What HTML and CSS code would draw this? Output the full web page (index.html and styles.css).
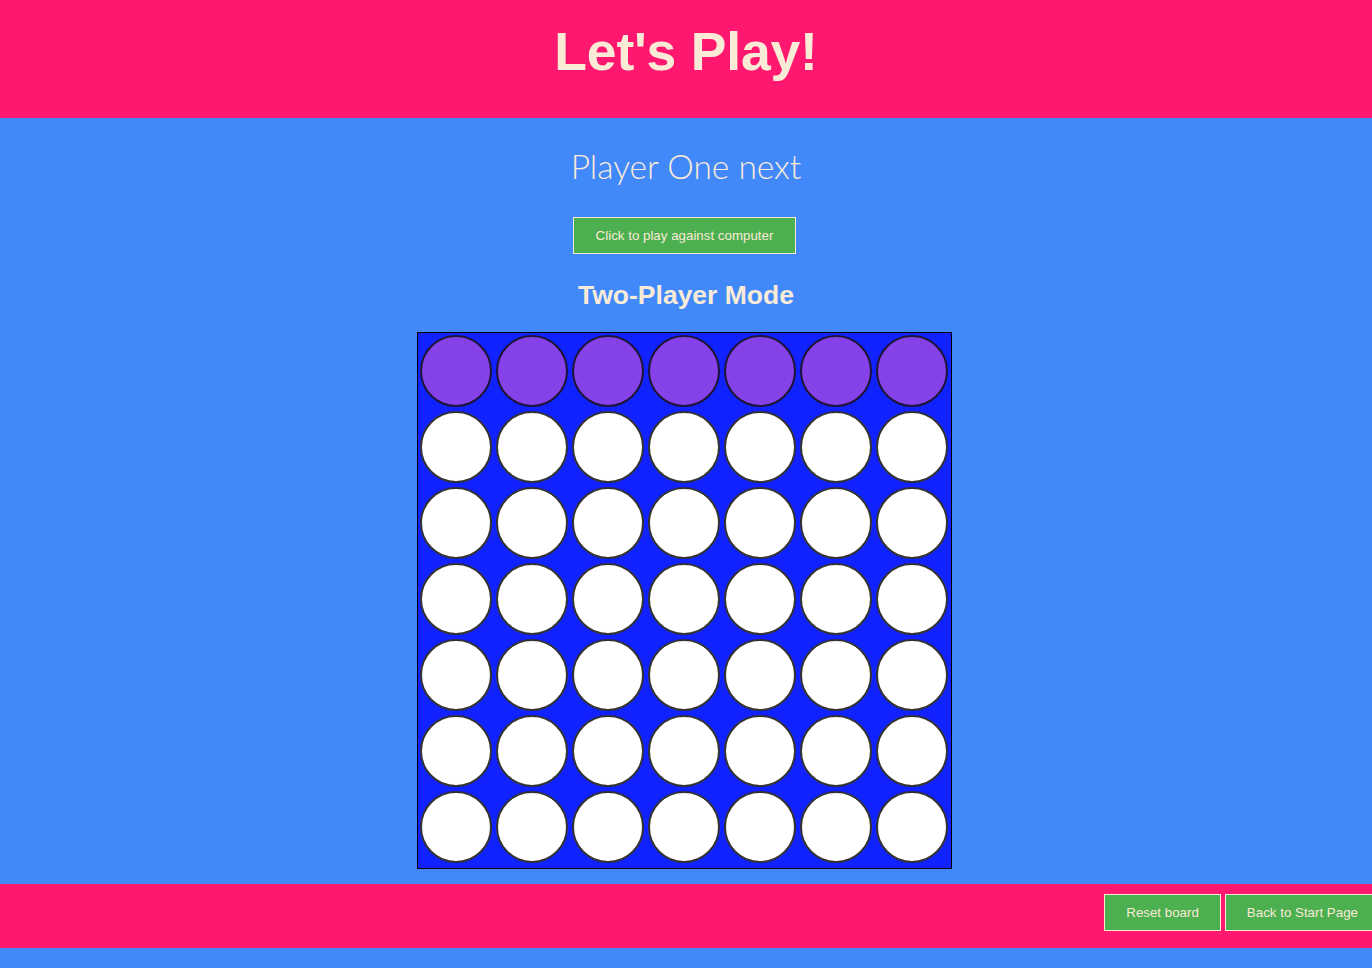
FILE: index.html
```html
<!DOCTYPE html>
<html lang="en">
<head>
<meta charset="utf-8">
<title>Let's Play!</title>
<link rel="stylesheet" href="styles.css">
</head>
<body>
<header class="top">
  <h1 class="title">Let's Play!</h1>
</header>
<main class="main">
  <h2 class="status">Player One next</h2>
  <button class="btn btn-mode">Click to play against computer</button>
  <h3 class="mode">Two-Player Mode</h3>
  <div class="board">
    <div class="cell top-cell"></div><div class="cell top-cell"></div><div class="cell top-cell"></div><div class="cell top-cell"></div><div class="cell top-cell"></div><div class="cell top-cell"></div><div class="cell top-cell"></div>
    <div class="cell"></div><div class="cell"></div><div class="cell"></div><div class="cell"></div><div class="cell"></div><div class="cell"></div><div class="cell"></div>
    <div class="cell"></div><div class="cell"></div><div class="cell"></div><div class="cell"></div><div class="cell"></div><div class="cell"></div><div class="cell"></div>
    <div class="cell"></div><div class="cell"></div><div class="cell"></div><div class="cell"></div><div class="cell"></div><div class="cell"></div><div class="cell"></div>
    <div class="cell"></div><div class="cell"></div><div class="cell"></div><div class="cell"></div><div class="cell"></div><div class="cell"></div><div class="cell"></div>
    <div class="cell"></div><div class="cell"></div><div class="cell"></div><div class="cell"></div><div class="cell"></div><div class="cell"></div><div class="cell"></div>
    <div class="cell"></div><div class="cell"></div><div class="cell"></div><div class="cell"></div><div class="cell"></div><div class="cell"></div><div class="cell"></div>
  </div>
</main>
<footer class="footer">
  <div class="footer-actions">
    <button class="btn">Reset board</button>
    <button class="btn">Back to Start Page</button>
  </div>
</footer>
</body>
</html>
```
FILE: styles.css
```css
html, body {
  margin: 0;
  padding: 0;
}
body {
  background: #4189fb;
  font-family: "Liberation Sans", Arial, sans-serif;
  color: #faebd7;
  min-height: 968px;
  overflow: hidden;
}
.top {
  background: #ff1770;
  height: 118px;
  box-sizing: border-box;
  padding-top: 21px;
}
.title {
  margin: 0;
  text-align: center;
  font-size: 53.5px;
  line-height: 62px;
  font-weight: 700;
  color: #faebd7;
  letter-spacing: -0.2px;
}
.main {
  display: flex;
  flex-direction: column;
  align-items: center;
}
.status {
  margin: 28px 0 0;
  font-family: Lato, "Open Sans", sans-serif;
  font-weight: 300;
  font-size: 33.5px;
  line-height: 40px;
  color: #faebd7;
}
.btn {
  background: #4caf50;
  color: #faebd7;
  border: 1px solid #faebd7;
  font-family: "Liberation Sans", Arial, sans-serif;
  font-size: 13.333px;
  line-height: 16px;
  padding: 9px 21px;
  margin: 0;
  cursor: pointer;
}
.btn-mode {
  margin-top: 31px;
  margin-right: 3px;
  width: 223px;
  height: 37px;
  padding: 0;
}
.mode {
  margin: 25px 0 0;
  font-size: 26.5px;
  line-height: 32px;
  font-weight: 700;
  color: #faebd7;
}
.board {
  margin-top: 21px;
  margin-right: 3px;
  background: #0f22ff;
  border: 1px solid #000;
  display: grid;
  grid-template-columns: repeat(7, 76px);
  grid-auto-rows: 76px;
  padding: 0 1px 3px 0;
}
.cell {
  width: 72px;
  height: 72px;
  box-sizing: border-box;
  margin: 2px;
  border-radius: 50%;
  background: #fff;
  border: 2px solid #333;
}
.top-cell {
  background: #8542e8;
  border-color: #1e1535;
}
.footer {
  margin-top: 15px;
  background: #ff1770;
  height: 64px;
  box-sizing: border-box;
  padding-top: 10px;
  overflow: hidden;
}
.footer-actions {
  display: flex;
  justify-content: flex-end;
  gap: 4px;
  margin-right: -8px;
}
.footer-actions .btn {
  height: 37px;
}
```
